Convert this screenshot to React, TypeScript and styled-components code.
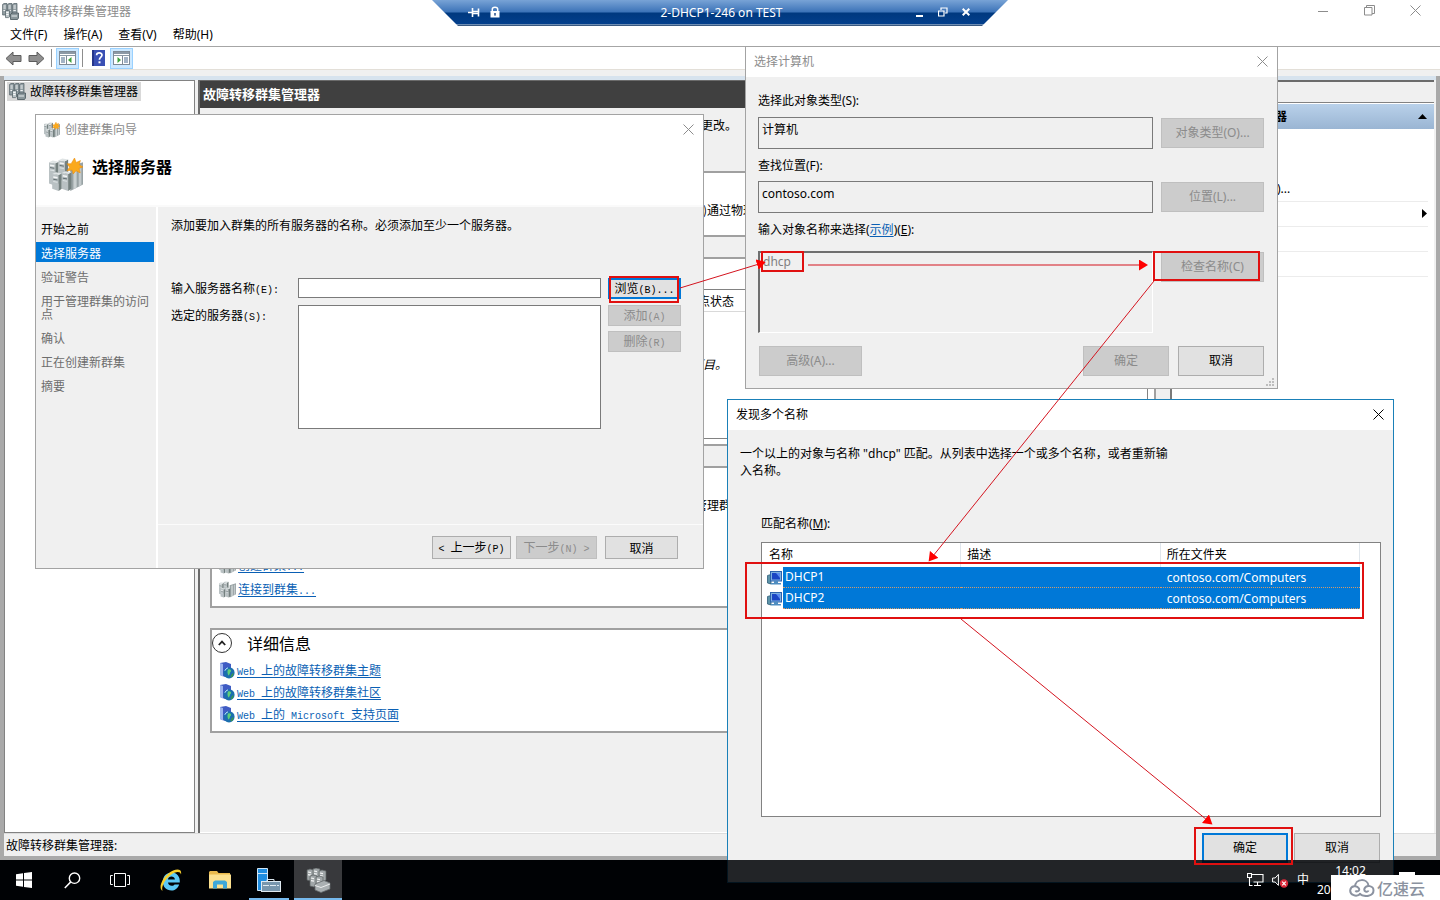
import React from "react";
import styled, { createGlobalStyle, css } from "styled-components";

const uiFont = `"Noto Sans", "Noto Sans CJK SC", sans-serif`;
const songFont = `"Noto Sans CJK SC", sans-serif`;

const GlobalStyle = createGlobalStyle`
  *, *::before, *::after { box-sizing: border-box; }
  body { margin: 0; background: #000; }
  button, input, textarea { font: inherit; margin: 0; }
`;

/* ---------- desktop and main window ---------- */

const Desktop = styled.div`
  position: relative;
  display: flex;
  flex-direction: column;
  min-height: 100vh;
  overflow: hidden;
  background: #000;
  color: #000;
  font: 12px/16px ${uiFont};
`;

const MainWindow = styled.main`
  flex: 1;
  display: flex;
  flex-direction: column;
  background: #f0f0f0;
`;

const MainTitle = styled.header`
  display: flex;
  align-items: center;
  height: 23px;
  padding-left: 2px;
  gap: 4px;
  background: #fff;
  color: #8c8c8c;
`;

const WindowTitle = styled.h1`
  flex: 1;
  margin: 0;
  font-size: 12px;
  font-weight: 400;
  line-height: 16px;
`;

const CaptionButton = styled.button<{ $w?: number; $color?: string }>`
  display: flex;
  align-items: center;
  justify-content: center;
  width: ${(p) => p.$w ?? 46}px;
  height: 22px;
  padding: 0 0 2px;
  border: 0;
  background: none;
  color: ${(p) => p.$color ?? "#8c8c8c"};
`;

const CaptionGroup = styled.div`
  display: flex;
  padding-right: 2px;
`;

const MenuBar = styled.nav`
  display: flex;
  height: 24px;
  padding-left: 2px;
  background: #fff;
  border-bottom: 1px solid #a6a6a6;
`;

const MenuItem = styled.button`
  height: 23px;
  padding: 0 8px;
  border: 0;
  background: none;
  line-height: 22px;
`;

const Toolbar = styled.div`
  display: flex;
  align-items: center;
  height: 23px;
  padding-left: 2px;
  background: #fff;
  border-bottom: 1px solid #e3dfd8;
`;

const ToolButton = styled.button<{ $on?: boolean }>`
  display: flex;
  align-items: center;
  justify-content: center;
  width: 23px;
  height: 21px;
  padding: 0;
  border: 1px solid ${(p) => (p.$on ? "#99d1ff" : "transparent")};
  background: ${(p) => (p.$on ? "#cce8ff" : "none")};
`;

const ToolDivider = styled.span`
  width: 1px;
  height: 18px;
  margin: 0 4px 0 3px;
  background: #8d8d8d;
`;

const Frame = styled.div`
  flex: 1;
  display: flex;
  flex-direction: column;
  margin-top: 6px;
  border: solid #a9a9a9;
  border-width: 0 4px 4px;
`;

const Panes = styled.div`
  flex: 1;
  display: grid;
  grid-template-columns: 191px minmax(0, 1fr) 264px;
  padding: 4px 2px 0 0;
  background: linear-gradient(#d7e3ee 4px, #f0f0f0 4px);
`;

const TreePane = styled.aside`
  border: 1px solid #828282;
  background: #fff;
  padding: 1px 2px;
`;

const TreeItem = styled.button`
  display: inline-flex;
  align-items: center;
  gap: 4px;
  height: 19px;
  padding: 0 3px 0 2px;
  border: 0;
  background: #d9d9d9;
`;

const CenterPane = styled.section`
  margin: 0 4px 0 3px;
  border: solid #6b6b6b;
  border-width: 1px 0 0 2px;
  font-family: ${songFont};
  box-shadow: inset 0 -1px #fff;
`;

const CenterHeading = styled.h2`
  margin: 0;
  height: 27px;
  padding-left: 3px;
  background: #404040;
  color: #fff;
  font: bold 13px/27px ${uiFont};
`;

const CenterBody = styled.div`
  display: flex;
  flex-direction: column;
  gap: 20px;
  padding: 0 10px;
`;

const Intro = styled.p`
  height: 43px;
  margin: 0;
  padding: 9px 0 0 491px;
`;

const Panel = styled.section<{ $h: number }>`
  min-height: ${(p) => p.$h}px;
  border: 2px solid #a0a0a0;
  background: #fff;
`;

const PanelText = styled.p<{ $top: number; $left: number }>`
  margin: 0;
  padding: ${(p) => p.$top}px 0 0 ${(p) => p.$left}px;
`;

const ClusterTable = styled.table`
  width: calc(100% - 10px);
  height: 150px;
  margin: 30px 6px 0 4px;
  border: 1px solid #828282;
  border-collapse: collapse;
  th {
    height: 22px;
    padding: 0 0 0 469px;
    border-bottom: 1px solid #d9d9d9;
    font-weight: 400;
    text-align: left;
  }
  td {
    padding: 44px 0 0 474px;
    vertical-align: top;
    font-style: italic;
  }
`;

const LinkList = styled.ul<{ $row: number; $top: number }>`
  margin: 0;
  padding: ${(p) => p.$top}px 0 0 7px;
  list-style: none;
  li {
    display: flex;
    align-items: center;
    gap: 2px;
    height: ${(p) => p.$row}px;
  }
`;

const Link = styled.a`
  color: #0a5fb4;
  text-decoration: underline;
  text-underline-offset: 2px;
`;

const Latin = styled.span`
  font: 10px/12px "Liberation Mono", monospace;
`;

const DetailsHeading = styled.h3`
  display: flex;
  align-items: center;
  gap: 15px;
  height: 25px;
  margin: 0;
  font-size: 16px;
  font-weight: 400;
`;

const RoundButton = styled.button`
  display: flex;
  align-items: center;
  justify-content: center;
  width: 20px;
  height: 20px;
  padding: 0;
  border: 1px solid #333;
  border-radius: 50%;
  background: #fff;
`;

const ActionsPane = styled.aside`
  border-left: 2px solid #7a7a7a;
  border-top: 2px solid #6b6b6b;
  background: #fff;
`;

const ActionsStrip = styled.div`
  height: 21px;
  border-bottom: 1px solid #828282;
  background: #f0f0f0;
`;

const ActionsHeading = styled.h2`
  display: flex;
  align-items: center;
  justify-content: space-between;
  height: 25px;
  margin: 1px 0;
  padding: 0 7px;
  background: linear-gradient(#b9d1ea, #9ab5d3);
  font-size: 12px;
`;

const ActionRow = styled.div<{ $h: number }>`
  display: flex;
  align-items: flex-end;
  justify-content: space-between;
  height: ${(p) => p.$h}px;
  margin: 0 6px 0 0;
  padding: 0 0 4px 105px;
  border-bottom: 1px solid #ececec;
`;

const StatusBar = styled.footer`
  height: 23px;
  padding: 0 2px;
  border-top: 1px solid #dcdcdc;
  line-height: 24px;
`;

/* ---------- remote session bar ---------- */

const SessionBar = styled.div`
  position: absolute;
  top: 0;
  left: calc(50% - 288px);
  display: flex;
  align-items: center;
  width: 576px;
  height: 26px;
  padding: 0 31px 0 35px;
  color: #fff;
  clip-path: polygon(0 0, 100% 0, 550px 100%, 26px 100%);
  background: linear-gradient(#78a3d6 0, #3c73b8 12px, #00397f 13px, #033f8c 24px, #8aa9cf 24px, #1d3d66 26px);
`;

const SessionTitle = styled.span`
  flex: 1;
  text-align: center;
  padding-left: 26px;
`;

/* ---------- dialogs ---------- */

const Dialog = styled.section<{ $x: number; $y: number; $w: number; $h: number; $active?: boolean }>`
  position: absolute;
  left: ${(p) => p.$x}px;
  top: ${(p) => p.$y}px;
  display: flex;
  flex-direction: column;
  width: ${(p) => p.$w}px;
  min-height: ${(p) => p.$h}px;
  border: 1px solid ${(p) => (p.$active ? "#1a80b8" : "#a3a3a3")};
  background: #f0f0f0;
`;

const DialogTitle = styled.header<{ $dark?: boolean }>`
  display: flex;
  align-items: center;
  gap: 5px;
  height: 30px;
  padding-left: 8px;
  background: #fff;
  color: ${(p) => (p.$dark ? "#000" : "#8c8c8c")};
`;

const disabledLook = css`
  border-color: #bfbfbf;
  background: #ccc;
  color: #8b8b8b;
`;

const PushButton = styled.button<{ $w: number; $h: number; $default?: boolean }>`
  width: ${(p) => p.$w}px;
  height: ${(p) => p.$h}px;
  padding: 0;
  border: ${(p) => (p.$default ? "2px solid #0078d7" : "1px solid #adadad")};
  background: #e1e1e1;
  color: #000;
  white-space: nowrap;
  &:disabled {
    ${disabledLook}
  }
`;

const WizardHead = styled.div`
  display: flex;
  gap: 9px;
  height: 62px;
  padding: 10px 0 0 13px;
  background: #fff;
  border-bottom: 2px solid #fafafa;
  svg { margin-top: 3px; }
`;

const WizardHeading = styled.h2`
  margin: 0;
  font: bold 16px/22px ${songFont};
`;

const WizardBody = styled.div`
  flex: 1;
  display: grid;
  grid-template-columns: 122px minmax(0, 1fr);
  font-family: ${songFont};
`;

const Steps = styled.ol`
  margin: 0;
  padding: 11px 2px 0 0;
  border-right: 2px solid #fff;
  list-style: none;
`;

const Step = styled.li<{ $state: "done" | "current" | "todo" }>`
  margin-bottom: 4px;
  padding: 4px 4px 3px 5px;
  line-height: 13px;
  color: ${(p) => ({ done: "#000", current: "#fff", todo: "#6d6d6d" })[p.$state]};
  background: ${(p) => (p.$state === "current" ? "#0078d7" : "none")};
`;

const WizardMain = styled.div`
  display: flex;
  flex-direction: column;
`;

const WizardForm = styled.div`
  flex: 1;
  padding: 10px 22px 0 13px;
`;

const Hint = styled.p`
  margin: 0 0 45px;
`;

const FormGrid = styled.div`
  display: grid;
  grid-template-columns: 127px minmax(0, 1fr) 73px;
  row-gap: 6px;
  align-items: start;
  input, textarea {
    width: calc(100% - 7px);
    border: 1px solid #7a7a7a;
    background: #fff;
    padding: 0 3px;
    resize: none;
    display: block;
  }
  input { height: 20px; }
  textarea { height: 124px; }
  label { line-height: 20px; }
`;

const ButtonStack = styled.div`
  display: flex;
  flex-direction: column;
  gap: 5px;
`;

const WizardFooter = styled.footer`
  display: flex;
  justify-content: flex-end;
  height: 44px;
  padding: 11px 25px 0 0;
  border-top: 1px solid #fbfbfb;
`;

const Spacer = styled.span<{ $w: number }>`
  width: ${(p) => p.$w}px;
`;

const PickerBody = styled.div`
  flex: 1;
  padding: 16px 13px 0 12px;
`;

const PickerField = styled.div<{ $h: number; $label: number }>`
  display: grid;
  grid-template-columns: minmax(0, 1fr) 103px;
  column-gap: 8px;
  align-items: start;
  align-content: start;
  height: ${(p) => p.$h}px;
  label {
    grid-column: 1 / -1;
    height: ${(p) => p.$label}px;
  }
  button { margin-top: 1px; }
`;

const PickerInput = styled.input`
  width: 100%;
  height: 32px;
  padding: 0 3px 8px;
  border: 1px solid #7a7a7a;
  background: #f0f0f0;
`;

const PickerArea = styled.textarea`
  display: block;
  width: 100%;
  height: 82px;
  padding: 1px 3px;
  resize: none;
  border: solid;
  border-width: 2px 1px 1px 2px;
  border-color: #6f6f6f #fff #fff #6f6f6f;
  background: #f0f0f0;
  color: #808080;
`;

const PickerButtons = styled.div`
  display: flex;
  gap: 9px;
  padding-left: 1px;
  button:first-child { margin-right: auto; }
`;

const Grip = styled.svg`
  align-self: flex-end;
  margin: 0 2px 1px 0;
`;

const MatchBody = styled.div`
  flex: 1;
  display: flex;
  flex-direction: column;
  padding: 15px 12px 0;
`;

const MatchMessage = styled.p`
  width: 436px;
  height: 71px;
  margin: 0;
  line-height: 17px;
`;

const MatchCaption = styled.label`
  height: 26px;
  padding-left: 21px;
`;

const MatchList = styled.div`
  height: 275px;
  margin-left: 21px;
  border: 1px solid #828282;
  background: #fff;
`;

const MatchTable = styled.table`
  width: 598px;
  table-layout: fixed;
  border-collapse: separate;
  border-spacing: 0;
  th {
    height: 24px;
    padding: 0 0 0 6px;
    border-right: 1px solid #e0e6ec;
    font-weight: 400;
    text-align: left;
  }
  th:first-child { padding-left: 7px; }
  td {
    height: 21px;
    padding: 2px 0 0 6px;
    border-bottom: 1px dotted #d39a6a;
    background: #0078d7;
    color: #fff;
  }
  td:first-child {
    padding: 0 0 0 5px;
    border: 0;
    background: #fff;
  }
`;

const NameCell = styled.span`
  display: flex;
  align-items: center;
`;

const NameText = styled.span`
  flex: 1;
  height: 21px;
  padding: 2px 0 0 2px;
  border-bottom: 1px dotted #d39a6a;
  background: #0078d7;
`;

const MatchButtons = styled.div`
  display: flex;
  justify-content: flex-end;
  gap: 6px;
  padding: 16px 1px 0 0;
`;

/* ---------- taskbar ---------- */

const Taskbar = styled.footer`
  position: relative;
  z-index: 2;
  display: flex;
  justify-content: space-between;
  height: 40px;
  background: rgba(0, 2, 6, 0.86);
  color: #fff;
`;

const TaskGroup = styled.div`
  display: flex;
`;

const TaskButton = styled.button<{ $w: number; $state?: "open" | "active" }>`
  display: flex;
  align-items: center;
  justify-content: center;
  width: ${(p) => p.$w}px;
  padding: 0;
  border: 0;
  background: ${(p) => (p.$state === "active" ? "#38393c" : "none")};
  box-shadow: ${(p) => (p.$state ? "inset 0 -2px #76b9ed" : "none")};
  color: #fff;
`;

const Tray = styled.div`
  display: flex;
  align-items: center;
  gap: 8px;
`;

const Clock = styled.time`
  align-self: flex-start;
  width: 67px;
  height: 40px;
  padding-top: 3px;
  text-align: center;
  line-height: 16px;
  span {
    display: block;
    text-align: left;
    padding-top: 3px;
  }
`;

const ShowDesktop = styled.button`
  width: 48px;
  height: 40px;
  padding: 0 0 0 7px;
  border: 0;
  background: none;
`;

const Notice = styled.span`
  display: block;
  width: 16px;
  height: 16px;
  background: #fff;
`;

const Watermark = styled.div`
  position: absolute;
  z-index: 4;
  right: 0;
  bottom: 0;
  display: flex;
  align-items: center;
  gap: 2px;
  width: 109px;
  height: 25px;
  padding-left: 18px;
  background: #fff;
  color: #8b92a0;
  font: 500 16px/24px "Noto Sans CJK SC", sans-serif;
`;

const Markup = styled.svg`
  position: absolute;
  z-index: 3;
  left: 0;
  top: 0;
  pointer-events: none;
`;

/* ---------- icons ---------- */

const Tower = ({ x, y, h = 14 }: { x: number; y: number; h?: number }) => (
  <g transform={`translate(${x} ${y})`}>
    <path d={`M0 2 L6 3 V${h + 2} L0 ${h}Z`} fill="#b9c1c3" />
    <path d={`M6 3 L9 1.5 V${h} L6 ${h + 2}Z`} fill="#74807f" />
    <path d="M0 2 L3.5 0.4 L9 1.5 L6 3Z" fill="#dfe4e5" />
    <path d="M1 4.8 L5 5.5" stroke="#f4f6f6" strokeWidth="1.4" />
    <path d="M1 7 L5 7.7" stroke="#606c6f" strokeWidth="0.9" />
    <path d="M1 9.2 L5 9.9" stroke="#dde3e4" strokeWidth="1" />
  </g>
);

const ClusterIcon = ({ size = 16, star = false }: { size?: number; star?: boolean }) => (
  <svg width={size} height={size} viewBox="0 0 32 32" aria-hidden="true">
    <path d="M20 8 L32 4 V25 L20 31Z" fill="#98a2a4" />
    <path d="M23 9 L26 8 V28 L23 29.5Z" fill="#c9d0d1" />
    <path d="M28 7.5 L30.5 6.5 V25.5 L28 27Z" fill="#c2c9cb" />
    <Tower x={0} y={2} h={22} />
    <Tower x={9} y={0} h={20} />
    <Tower x={3} y={13} h={16} />
    <Tower x={12} y={12} h={17} />
    {star && (
      <path
        d="M24 0 L25.6 4.2 L29.6 2.4 L28.4 6.4 L32 8.4 L28.3 9.8 L29.4 14 L25.4 12 L22.8 15 L21.7 11.4 L17 12 L19.4 8.6 L17 5.4 L20.8 5.4Z"
        fill="#fba91c"
        stroke="#e98a0c"
        strokeWidth="0.5"
      />
    )}
  </svg>
);

const SnapInIcon = () => (
  <svg width="17" height="17" viewBox="0 0 17 17" aria-hidden="true">
    {[0, 5, 10].map((x) => (
      <g key={x}>
        <path d={`M${x + 0.6} 1.4 L${x + 2} 0.5 H${x + 5} V11 L${x + 4} 12 H${x + 0.6}Z`} fill="#929ea3" stroke="#4f5d63" strokeWidth="0.7" />
        <path d={`M${x + 1.4} 3h2.4M${x + 1.4} 5h2.4M${x + 1.4} 7.5h2.4`} stroke="#fff" strokeWidth="0.9" />
      </g>
    ))}
    <path d="M3.5 7.5h4v6.5l-1 0.6h-3z" fill="#bcc5c8" stroke="#4f5d63" strokeWidth="0.7" />
    <path d="M4.2 9.5h2.4M4.2 11.5h2.4" stroke="#fff" strokeWidth="0.9" />
    <path d="M8.5 11.5 L10 10 H16.5 V15 L15.5 16.5 H8.5Z" fill="#8b979b" stroke="#48545a" strokeWidth="0.8" />
    <path d="M9.5 13h5.5" stroke="#e8ecee" />
  </svg>
);

const CloseIcon = ({ size = 11 }: { size?: number }) => (
  <svg width={size} height={size} viewBox="0 0 11 11" aria-hidden="true">
    <path d="M0.5 0.5 L10.5 10.5 M10.5 0.5 L0.5 10.5" stroke="currentColor" fill="none" />
  </svg>
);

const ArrowIcon = ({ flip }: { flip?: boolean }) => (
  <svg width="17" height="15" viewBox="0 0 17 15" aria-hidden="true">
    <path
      transform={flip ? "translate(17 0) scale(-1 1)" : undefined}
      d="M1 7.5 L8 1 V4.5 H16 V10.5 H8 V14Z"
      fill="#8f8f8f"
      stroke="#5c5c5c"
    />
  </svg>
);

const PaneIcon = ({ right }: { right?: boolean }) => (
  <svg width="17" height="15" viewBox="0 0 17 15" aria-hidden="true">
    <rect x="0.5" y="0.5" width="16" height="13" fill="#fff" stroke="#7f8b97" />
    <path d="M1 2h15" stroke="#8c99a6" strokeWidth="2" />
    <path d="M1 4.5h15" stroke="#8c99a6" />
    {right ? (
      <>
        <path d="M4.5 6 L8 9 L4.5 12Z" fill="#3da23d" />
        <path d="M9.5 5v8" stroke="#7f8b97" />
        <path d="M11 7h4M11 9h4M11 11h4" stroke="#49688c" />
      </>
    ) : (
      <>
        <path d="M12.5 6 L9 9 L12.5 12Z" fill="#3da23d" />
        <path d="M7.5 5v8" stroke="#7f8b97" />
        <path d="M2 7h4M2 9h4M2 11h4" stroke="#49688c" />
      </>
    )}
  </svg>
);

const HelpIcon = () => (
  <svg width="13" height="16" viewBox="0 0 13 16" aria-hidden="true">
    <rect width="13" height="16" fill="#3a50b4" />
    <rect width="2" height="16" fill="#26368a" />
    <path d="M4.6 5.2 C4.6 2.2 10 2.2 10 5 C10 7 7.4 7.2 7.4 9.8" stroke="#fff" strokeWidth="1.7" fill="none" />
    <rect x="6.5" y="11.3" width="2" height="2" fill="#fff" />
  </svg>
);

const WebIcon = () => (
  <svg width="16" height="17" viewBox="0 0 16 17" aria-hidden="true">
    <path d="M1 1 L7 0 L12 2 V14 L6 15 L1 13Z" fill="#3f5cc4" />
    <path d="M1 1 L4 2 V14.5 L1 13Z" fill="#9db4ee" />
    <circle cx="10" cy="10.8" r="5.6" fill="#1b6fae" />
    <path d="M9 7.5 C11 6.5 12.5 8 12 9.5 C10.5 10 11.5 12 9.5 13.5 C8.5 12 8 9.5 9 7.5Z" fill="#5fd07a" />
    <path d="M13 12 L14.8 11 L13.4 14.6 L11.5 15.4Z" fill="#3f9f3a" />
    <path d="M5.8 8.8 A5 5 0 0 1 9 5.8" stroke="#bfe6ff" fill="none" />
  </svg>
);

const ComputerIcon = () => (
  <svg width="16" height="16" viewBox="0 0 16 16" aria-hidden="true">
    <path d="M0.5 5.5 L4 4.5 V14 L0.5 13Z" fill="#5c93a8" stroke="#2e5d78" strokeWidth="0.8" />
    <rect x="3.5" y="1.5" width="11" height="9.5" fill="#7fb0e0" stroke="#2d62ad" />
    <path d="M5 3h8v6.5H5z" fill="#1b45c4" />
    <path d="M9 3h4v5Z" fill="#5a8bf0" />
    <path d="M7 11h4v2h3v1.5H4V13h3z" fill="#4f8dc0" />
  </svg>
);

const PinIcon = () => (
  <svg width="12" height="9" viewBox="0 0 12 9" aria-hidden="true">
    <path d="M0 4.5h4 M4.5 0v9 M5 3.5h5 M5 5.5h5 M10.5 0.5v8" stroke="#fff" strokeWidth="1.6" fill="none" />
  </svg>
);

const LockIcon = () => (
  <svg width="10" height="12" viewBox="0 0 10 12" aria-hidden="true">
    <rect x="0.5" y="5" width="9" height="6.5" fill="#fff" />
    <path d="M2.3 5 V3.2 C2.3 0.6 7.7 0.6 7.7 3.2 V5" stroke="#fff" strokeWidth="1.5" fill="none" />
    <rect x="4.3" y="7" width="1.4" height="2.6" fill="#123f80" />
  </svg>
);

const IeIcon = () => (
  <svg width="24" height="24" viewBox="0 0 24 24" aria-hidden="true">
    <path
      d="M20.8 14.5 H9 C9.4 18.6 14.6 18.4 15.6 16.4 H20.2 C18.6 20.6 15.8 22.4 12.6 22.4 C7.2 22.4 3.8 18.6 3.8 13.4 C3.8 8.2 7.6 4.4 12.6 4.4 C18.2 4.4 21.3 8.8 20.8 14.5Z M9 11.4 H15.9 C15.5 7.6 9.5 7.6 9 11.4Z"
      fill="#5bc8f4"
      fillRule="evenodd"
    />
    <path
      d="M3.6 22.8 C-1 20.4 2.8 11 9.4 5.6 C15.4 0.6 23.4 -0.4 22 6.4 C21.4 2.8 16.6 3.2 11.4 7.2 C6 11.4 1.8 19 3.6 22.8Z"
      fill="#f7cf2c"
    />
  </svg>
);

const FolderIcon = () => (
  <svg width="22" height="20" viewBox="0 0 22 20" aria-hidden="true">
    <path d="M0 2 L1 1 H8 L9.5 3 H21 V18 H0Z" fill="#e9b94c" />
    <path d="M0 4.5 H22 V18.5 H0Z" fill="#fbe08f" />
    <path d="M4 18.5 V12 L6 10.5 H16 L18 12 V18.5 H14 V14.5 H8 V18.5Z" fill="#3da7d8" />
  </svg>
);

const ServerManagerIcon = () => (
  <svg width="24" height="24" viewBox="0 0 24 24" aria-hidden="true">
    <path d="M0.5 0.5 H10.5 V22.5 H0.5Z" fill="#1f8de0" stroke="#cfe6f8" />
    <path d="M1 5.5h9.5" stroke="#cfe6f8" />
    <path d="M10 13.5 V11.5 H17 V13.5" stroke="#d9e5ee" fill="none" />
    <rect x="4.5" y="13.5" width="19" height="10" fill="#7896ad" stroke="#dfeaf2" />
    <path d="M6 17.5h16" stroke="#dfeaf2" strokeDasharray="6 1" />
  </svg>
);

const ClusterTaskIcon = () => (
  <svg width="25" height="25" viewBox="0 0 25 25" aria-hidden="true">
    {[
      [1, 1],
      [7, 0],
      [13, 2],
      [4, 7],
      [10, 8],
    ].map(([x, y]) => (
      <g key={`${x}-${y}`}>
        <path d={`M${x} ${y + 1} l3 -1 l4 1 v9 l-3 2 l-4 -1z`} fill="#a0a6a8" stroke="#5c6163" strokeWidth="0.7" />
        <path d={`M${x + 1} ${y + 3} l3 0.6 m-3 2 l3 0.6`} stroke="#f3f5f5" strokeWidth="1.2" />
      </g>
    ))}
    <path d="M9 16 L18 12.5 L24 15 V21 L15 24.5 L9 22Z" fill="#aab0b2" stroke="#666b6d" strokeWidth="0.8" />
    <path d="M9 17.5 L15 19.5 L24 16" stroke="#eceeee" fill="none" />
  </svg>
);

/* ---------- page ---------- */

const matches = [
  { name: "DHCP1", folder: "contoso.com/Computers" },
  { name: "DHCP2", folder: "contoso.com/Computers" },
];

const steps: { text: string; state: "done" | "current" | "todo" }[] = [
  { text: "开始之前", state: "done" },
  { text: "选择服务器", state: "current" },
  { text: "验证警告", state: "todo" },
  { text: "用于管理群集的访问点", state: "todo" },
  { text: "确认", state: "todo" },
  { text: "正在创建新群集", state: "todo" },
  { text: "摘要", state: "todo" },
];

const ManagerWindow = () => (
  <MainWindow>
    <MainTitle>
      <SnapInIcon />
      <WindowTitle>故障转移群集管理器</WindowTitle>
      <CaptionGroup>
        <CaptionButton aria-label="最小化">
          <svg width="10" height="10" viewBox="0 0 10 10"><path d="M0 5.5h10" stroke="currentColor" /></svg>
        </CaptionButton>
        <CaptionButton aria-label="还原">
          <svg width="11" height="11" viewBox="0 0 11 11">
            <path d="M0.5 2.5h7.5v7.5h-7.5z M2.5 2.5v-2h8v8h-2.5" fill="none" stroke="currentColor" />
          </svg>
        </CaptionButton>
        <CaptionButton aria-label="关闭"><CloseIcon /></CaptionButton>
      </CaptionGroup>
    </MainTitle>
    <MenuBar>
      <MenuItem>文件(F)</MenuItem>
      <MenuItem>操作(A)</MenuItem>
      <MenuItem>查看(V)</MenuItem>
      <MenuItem>帮助(H)</MenuItem>
    </MenuBar>
    <Toolbar>
      <ToolButton aria-label="后退"><ArrowIcon /></ToolButton>
      <ToolButton aria-label="前进"><ArrowIcon flip /></ToolButton>
      <ToolDivider />
      <ToolButton $on aria-label="控制台树"><PaneIcon /></ToolButton>
      <ToolDivider />
      <ToolButton aria-label="帮助"><HelpIcon /></ToolButton>
      <ToolButton $on aria-label="操作窗格"><PaneIcon right /></ToolButton>
    </Toolbar>
    <Frame>
      <Panes>
        <TreePane>
          <TreeItem><SnapInIcon />故障转移群集管理器</TreeItem>
        </TreePane>
        <CenterPane>
          <CenterHeading>故障转移群集管理器</CenterHeading>
          <CenterBody>
            <Intro>更改。</Intro>
            <Panel $h={66}><PanelText $top={29} $left={491}>)通过物理</PanelText></Panel>
            <Panel $h={189}>
              <ClusterTable>
                <thead><tr><th>节点状态</th></tr></thead>
                <tbody><tr><td>项目。</td></tr></tbody>
              </ClusterTable>
            </Panel>
            <Panel $h={142}>
              <PanelText $top={29} $left={483}>管理群</PanelText>
              <LinkList $row={24} $top={40}>
                <li><ClusterIcon size={17} /><Link href="#create">创建群集<Latin>...</Latin></Link></li>
                <li><ClusterIcon size={17} /><Link href="#connect">连接到群集<Latin>...</Latin></Link></li>
              </LinkList>
            </Panel>
            <Panel $h={105}>
              <DetailsHeading>
                <RoundButton aria-label="折叠">
                  <svg width="8" height="6" viewBox="0 0 8 6"><path d="M0.8 5 L4 1.6 L7.2 5" fill="none" stroke="#222" strokeWidth="1.8" /></svg>
                </RoundButton>
                详细信息
              </DetailsHeading>
              <LinkList $row={22} $top={4}>
                <li><WebIcon /><Link href="#topics"><Latin>Web </Latin>上的故障转移群集主题</Link></li>
                <li><WebIcon /><Link href="#community"><Latin>Web </Latin>上的故障转移群集社区</Link></li>
                <li><WebIcon /><Link href="#support"><Latin>Web </Latin>上的<Latin> Microsoft </Latin>支持页面</Link></li>
              </LinkList>
            </Panel>
          </CenterBody>
        </CenterPane>
        <ActionsPane>
          <ActionsStrip />
          <ActionsHeading>
            故障转移群集管理器
            <svg width="9" height="5" viewBox="0 0 9 5"><path d="M0 5 L4.5 0 L9 5Z" /></svg>
          </ActionsHeading>
          <ActionRow $h={72}>)...</ActionRow>
          <ActionRow $h={25}>
            <span />
            <svg width="7" height="16" viewBox="0 0 7 16"><path d="M1 3 L6 7.5 L1 12Z" /></svg>
          </ActionRow>
          <ActionRow $h={25} />
          <ActionRow $h={25} />
        </ActionsPane>
      </Panes>
      <StatusBar>故障转移群集管理器:</StatusBar>
    </Frame>
  </MainWindow>
);

const RemoteBar = () => (
  <SessionBar>
    <CaptionButton $w={14} aria-label="固定"><PinIcon /></CaptionButton>
    <CaptionButton $w={28} aria-label="安全信息"><LockIcon /></CaptionButton>
    <SessionTitle>2-DHCP1-246 on TEST</SessionTitle>
    <CaptionButton $w={23} aria-label="最小化">
      <svg width="7" height="10" viewBox="0 0 7 10"><path d="M0 9h7" stroke="#fff" strokeWidth="2" /></svg>
    </CaptionButton>
    <CaptionButton $w={23} aria-label="还原">
      <svg width="10" height="10" viewBox="0 0 10 10">
        <path d="M0.5 4h5.5v5h-5.5z M0 4h6 M3 3V1h6v5h-2 M3 1h6" fill="none" stroke="#fff" strokeWidth="1.2" />
      </svg>
    </CaptionButton>
    <CaptionButton $w={23} aria-label="关闭">
      <svg width="8" height="8" viewBox="0 0 8 8"><path d="M0.7 0.7 L7.3 7.3 M7.3 0.7 L0.7 7.3" stroke="#fff" strokeWidth="2" /></svg>
    </CaptionButton>
  </SessionBar>
);

const WizardDialog = () => (
  <Dialog $x={35} $y={114} $w={669} $h={455}>
    <DialogTitle>
      <ClusterIcon star />
      <WindowTitle as="h2">创建群集向导</WindowTitle>
      <CaptionButton $w={30} aria-label="关闭"><CloseIcon /></CaptionButton>
    </DialogTitle>
    <WizardHead>
      <ClusterIcon size={34} star />
      <WizardHeading>选择服务器</WizardHeading>
    </WizardHead>
    <WizardBody>
      <Steps>
        {steps.map((s) => (
          <Step key={s.text} $state={s.state}>{s.text}</Step>
        ))}
      </Steps>
      <WizardMain>
        <WizardForm>
          <Hint>添加要加入群集的所有服务器的名称。必须添加至少一个服务器。</Hint>
          <FormGrid>
            <label htmlFor="server-name">输入服务器名称<Latin>(E):</Latin></label>
            <input id="server-name" />
            <PushButton $w={73} $h={21} $default>浏览<Latin>(B)...</Latin></PushButton>
            <label htmlFor="server-list">选定的服务器<Latin>(S):</Latin></label>
            <textarea id="server-list" readOnly />
            <ButtonStack>
              <PushButton $w={73} $h={21} disabled>添加<Latin>(A)</Latin></PushButton>
              <PushButton $w={73} $h={21} disabled>删除<Latin>(R)</Latin></PushButton>
            </ButtonStack>
          </FormGrid>
        </WizardForm>
        <WizardFooter>
          <PushButton $w={79} $h={23}><Latin>&lt; </Latin>上一步<Latin>(P)</Latin></PushButton>
          <Spacer $w={5} />
          <PushButton $w={81} $h={23} disabled>下一步<Latin>(N) &gt;</Latin></PushButton>
          <Spacer $w={8} />
          <PushButton $w={73} $h={23}>取消</PushButton>
        </WizardFooter>
      </WizardMain>
    </WizardBody>
  </Dialog>
);

const PickerDialog = () => (
  <Dialog $x={745} $y={46} $w={533} $h={343}>
    <DialogTitle>
      <WindowTitle as="h2">选择计算机</WindowTitle>
      <CaptionButton $w={30} aria-label="关闭"><CloseIcon /></CaptionButton>
    </DialogTitle>
    <PickerBody>
      <PickerField $h={65} $label={24}>
        <label htmlFor="object-type">选择此对象类型(S):</label>
        <PickerInput id="object-type" readOnly value="计算机" />
        <PushButton $w={103} $h={30} disabled>对象类型(O)...</PushButton>
      </PickerField>
      <PickerField $h={64} $label={23}>
        <label htmlFor="location">查找位置(F):</label>
        <PickerInput id="location" readOnly value="contoso.com" />
        <PushButton $w={103} $h={30} disabled>位置(L)...</PushButton>
      </PickerField>
      <PickerField $h={124} $label={29}>
        <label htmlFor="object-names">
          输入对象名称来选择(<Link href="#examples">示例</Link>)(<u>E</u>):
        </label>
        <PickerArea id="object-names" disabled value="dhcp" />
        <PushButton $w={103} $h={30} disabled>检查名称(C)</PushButton>
      </PickerField>
      <PickerButtons>
        <PushButton $w={103} $h={30} disabled>高级(A)...</PushButton>
        <PushButton $w={86} $h={30} disabled>确定</PushButton>
        <PushButton $w={86} $h={30}>取消</PushButton>
      </PickerButtons>
    </PickerBody>
    <Grip width="9" height="9" viewBox="0 0 9 9">
      <path d="M6 0h2v2h-2z M3 3h2v2h-2z M6 3h2v2h-2z M0 6h2v2h-2z M3 6h2v2h-2z M6 6h2v2h-2z" fill="#bdbdbd" />
    </Grip>
  </Dialog>
);

const MatchesDialog = () => (
  <Dialog $x={727} $y={399} $w={667} $h={484} $active>
    <DialogTitle $dark>
      <WindowTitle as="h2">发现多个名称</WindowTitle>
      <CaptionButton $w={30} $color="#000" aria-label="关闭"><CloseIcon /></CaptionButton>
    </DialogTitle>
    <MatchBody>
      <MatchMessage>
        一个以上的对象与名称 "dhcp" 匹配。从列表中选择一个或多个名称，或者重新输入名称。
      </MatchMessage>
      <MatchCaption htmlFor="matches">匹配名称(<u>M</u>):</MatchCaption>
      <MatchList>
        <MatchTable id="matches">
          <thead>
            <tr><th>名称</th><th>描述</th><th>所在文件夹</th></tr>
          </thead>
          <tbody>
            {matches.map((m) => (
              <tr key={m.name}>
                <td><NameCell><ComputerIcon /><NameText>{m.name}</NameText></NameCell></td>
                <td />
                <td>{m.folder}</td>
              </tr>
            ))}
          </tbody>
        </MatchTable>
      </MatchList>
      <MatchButtons>
        <PushButton $w={86} $h={30} $default>确定</PushButton>
        <PushButton $w={86} $h={30}>取消</PushButton>
      </MatchButtons>
    </MatchBody>
  </Dialog>
);

const DesktopTaskbar = () => (
  <Taskbar>
    <TaskGroup>
      <TaskButton $w={48} aria-label="开始">
        <svg width="16" height="16" viewBox="0 0 16 16">
          <path d="M0 2.3 L7 1.3 V7.6 H0Z M8 1.1 L16 0 V7.6 H8Z M0 8.5 H7 V14.8 L0 13.8Z M8 8.5 H16 V16 L8 15Z" fill="#fff" />
        </svg>
      </TaskButton>
      <TaskButton $w={48} aria-label="搜索">
        <svg width="17" height="17" viewBox="0 0 17 17">
          <circle cx="10.5" cy="6.2" r="5.2" fill="none" stroke="#fff" strokeWidth="1.4" />
          <path d="M6.8 9.9 L0.8 16" stroke="#fff" strokeWidth="1.5" />
        </svg>
      </TaskButton>
      <TaskButton $w={48} aria-label="任务视图">
        <svg width="20" height="16" viewBox="0 0 20 16">
          <path d="M4.5 1.5h11v13h-11z M2.8 3.5H0.5v9h2.3 M17.2 3.5h2.3v9h-2.3" fill="none" stroke="#fff" strokeWidth="1" />
        </svg>
      </TaskButton>
      <TaskButton $w={54} aria-label="Internet Explorer"><IeIcon /></TaskButton>
      <TaskButton $w={44} aria-label="文件资源管理器"><FolderIcon /></TaskButton>
      <Spacer $w={7} />
      <TaskButton $w={40} $state="open" aria-label="服务器管理器"><ServerManagerIcon /></TaskButton>
      <Spacer $w={5} />
      <TaskButton $w={48} $state="active" aria-label="故障转移群集管理器"><ClusterTaskIcon /></TaskButton>
    </TaskGroup>
    <Tray>
      <svg width="17" height="14" viewBox="0 0 17 14" aria-hidden="true">
        <path d="M5 1.5h11v7.5h-9.5 M10.5 9v3.5 M7 12.5h7 M0.5 0.5h4v4h-4z M2.5 4.5v8h3" fill="none" stroke="#fff" strokeWidth="1.1" />
      </svg>
      <svg width="17" height="15" viewBox="0 0 17 15" aria-hidden="true">
        <path d="M0.6 5h2.6l3.2-3.6v11l-3.2-3.4H0.6z" fill="none" stroke="#fff" />
        <circle cx="12" cy="10.5" r="4.2" fill="#d9293a" />
        <path d="M10.2 8.7 L13.8 12.3 M13.8 8.7 L10.2 12.3" stroke="#fff" strokeWidth="1.2" />
      </svg>
      <span>中</span>
      <Clock>14:02<span>20</span></Clock>
      <ShowDesktop aria-label="通知"><Notice /></ShowDesktop>
    </Tray>
  </Taskbar>
);

const callouts = [
  [610, 277, 68, 25],
  [762, 252, 41, 19],
  [1154, 252, 105, 28],
  [746, 563, 617, 55],
  [1195, 828, 97, 36],
];

const pointers = [
  [680, 288, 759, 264],
  [808, 265, 1141, 265],
  [1154, 281, 933, 556],
  [961, 619, 1207, 820],
];

const Annotations = () => (
  <Markup width="1440" height="900" viewBox="0 0 1440 900" aria-hidden="true">
    <defs>
      <marker id="tip" markerUnits="userSpaceOnUse" markerWidth="10" markerHeight="12" refX="2" refY="5.5" orient="auto">
        <path d="M0 0 L9 5.5 L0 11Z" fill="#f00" />
      </marker>
    </defs>
    {callouts.map(([x, y, w, h]) => (
      <rect key={x} x={x} y={y} width={w} height={h} fill="none" stroke="#e01010" strokeWidth="2" />
    ))}
    {pointers.map(([x1, y1, x2, y2]) => (
      <line key={x1} x1={x1} y1={y1} x2={x2} y2={y2} stroke="#d4141f" strokeWidth="1" markerEnd="url(#tip)" />
    ))}
  </Markup>
);

const SiteMark = () => (
  <Watermark>
    <svg width="26" height="18" viewBox="0 0 26 18" aria-hidden="true">
      <g fill="none" stroke="#8b92a0" strokeWidth="2">
        <path d="M6 8 C6 -1 19 -1 19.5 7" />
        <path d="M12 14.5 C7 19 1 15.5 1.2 11.5 C1.6 6.5 8 6 10 9.5 C11 12 7.5 13.5 6.5 11.5" />
        <path d="M10 14.5 C16 19 24.5 17 24.5 11.5 C24.5 6.5 17.5 5.5 15.5 9.5 C14.5 12.5 18.5 14 19.5 11.5" />
      </g>
    </svg>
    亿速云
  </Watermark>
);

export default function App() {
  return (
    <Desktop>
      <GlobalStyle />
      <ManagerWindow />
      <RemoteBar />
      <WizardDialog />
      <PickerDialog />
      <MatchesDialog />
      <DesktopTaskbar />
      <Annotations />
      <SiteMark />
    </Desktop>
  );
}
